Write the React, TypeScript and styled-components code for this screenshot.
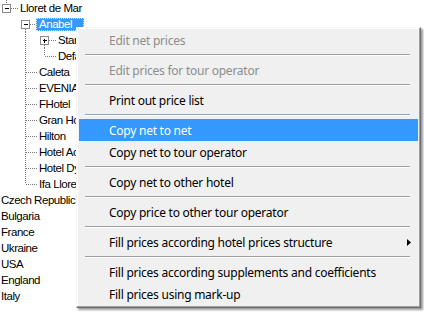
import React from 'react';
import styled, { createGlobalStyle } from 'styled-components';

const GlobalStyle = createGlobalStyle`
  html, body {
    margin: 0;
    padding: 0;
    background: #ffffff;
  }
  body {
    width: 424px;
    height: 319px;
    overflow: hidden;
  }
`;

type BoxKind = 'plus' | 'minus' | null;

interface TreeNode {
  label: string;
  level: number;
  guides: boolean[]; // vertical guide per ancestor column (levels 1..level-1)
  up?: boolean;
  down?: boolean;
  box?: BoxKind;
  selected?: boolean;
}

const Screen = styled.div`
  position: relative;
  width: 424px;
  height: 319px;
  overflow: hidden;
  background: #ffffff;
`;

const Tree = styled.div`
  display: flex;
  flex-direction: column;
  font-family: "Liberation Sans", Arial, sans-serif;
  font-size: 11.5px;
  letter-spacing: -0.45px;
  color: #000;
`;

const Row = styled.div`
  display: flex;
  align-items: center;
  height: 16px;
  white-space: nowrap;
`;

const Guide = styled.div<{ $line: boolean }>`
  flex: 0 0 19px;
  height: 16px;
  background-image: ${(p) =>
    p.$line ? 'linear-gradient(to bottom, #7a7a7a 50%, transparent 50%)' : 'none'};
  background-size: 1px 2px;
  background-repeat: repeat-y;
  background-position: 6px 0;
`;

const Label = styled.span<{ $selected?: boolean }>`
  box-sizing: border-box;
  margin-left: -2px;
  padding: 0 2px 0 3px;
  min-width: ${(p) => (p.$selected ? '48px' : '0')};
  height: 13px;
  line-height: 13px;
  color: ${(p) => (p.$selected ? '#ffffff' : '#000000')};
  background: ${(p) => (p.$selected ? '#3399ff' : 'transparent')};
  outline: ${(p) => (p.$selected ? '1px dotted #cfe6ff' : 'none')};
  outline-offset: -1px;
`;

const Connector = ({ up, down, box }: { up?: boolean; down?: boolean; box?: BoxKind }) => (
  <svg width="19" height="16" viewBox="0 0 19 16" style={{ flex: '0 0 19px', display: 'block' }} shapeRendering="crispEdges">
    {up && <line x1="6.5" y1="0" x2="6.5" y2={box ? 4 : 8} stroke="#7a7a7a" strokeDasharray="1 1" />}
    {down && <line x1="6.5" y1={box ? 13 : 8} x2="6.5" y2="16" stroke="#7a7a7a" strokeDasharray="1 1" />}
    <line x1={box ? 11 : 7} y1="8.5" x2="18" y2="8.5" stroke="#7a7a7a" strokeDasharray="1 1" />
    {box && (
      <>
        <rect x="2.5" y="4.5" width="8" height="8" fill="#ffffff" stroke="#8c8c8c" />
        <line x1="4.5" y1="8.5" x2="9" y2="8.5" stroke="#000" />
        {box === 'plus' && <line x1="6.5" y1="6.5" x2="6.5" y2="11" stroke="#000" />}
      </>
    )}
  </svg>
);

const hotels = ['Caleta', 'EVENIA Olympic', 'FHotel', 'Gran Hotel Monterrey', 'Hilton', 'Hotel Acacias', 'Hotel Dynamic', 'Ifa Lloret'];

const NODES: TreeNode[] = [
  { label: 'Lloret de Mar', level: 1, guides: [], up: true, box: 'minus' },
  { label: 'Anabel', level: 2, guides: [false], down: true, box: 'minus', selected: true },
  { label: 'Standard', level: 3, guides: [false, true], down: true, box: 'plus' },
  { label: 'Default', level: 3, guides: [false, true], up: true },
  ...hotels.map((h, i) => ({
    label: h,
    level: 2,
    guides: [false],
    up: true,
    down: i < hotels.length - 1,
  })),
  ...['Czech Republic', 'Bulgaria', 'France', 'Ukraine', 'USA', 'England', 'Italy'].map((c) => ({
    label: c,
    level: 0,
    guides: [],
  })),
];

const Menu = styled.div`
  position: absolute;
  left: 76px;
  top: 27px;
  width: 339px;
  display: flex;
  flex-direction: column;
  padding: 1px 2px 2px 2px;
  background: #f0f0f0;
  border: 1px solid;
  border-color: #f7f7f7 #6e6e6e #6e6e6e #f7f7f7;
  box-shadow: inset -1px -1px 0 #a0a0a0, inset 1px 1px 0 #ffffff, 2px 2px 2px rgba(0, 0, 0, 0.4);
  font-family: "Noto Sans", "Open Sans", sans-serif;
  font-size: 12px;
  letter-spacing: -0.25px;
`;

const Item = styled.div<{ $disabled?: boolean; $active?: boolean }>`
  display: flex;
  align-items: center;
  justify-content: space-between;
  height: 22px;
  padding: 0 7px 0 30px;
  white-space: nowrap;
  color: ${(p) => (p.$active ? '#ffffff' : p.$disabled ? '#8d8d8d' : '#000000')};
  background: ${(p) => (p.$active ? '#3399ff' : 'transparent')};
`;

const Separator = styled.div`
  height: 8px;
  margin: 0 8px 0 6px;
  display: flex;
  flex-direction: column;
  justify-content: flex-start;
  &::before {
    content: '';
    display: block;
    margin-top: 3px;
    height: 1px;
    background: #a0a0a0;
  }
  &::after {
    content: '';
    display: block;
    height: 1px;
    background: #ffffff;
  }
`;

const Arrow = () => (
  <svg width="4" height="7" viewBox="0 0 4 7" style={{ display: 'block' }}>
    <polygon points="0,0 4,3.5 0,7" fill="#000" />
  </svg>
);

type MenuEntry =
  | { sep: true }
  | { text: string; disabled?: boolean; active?: boolean; submenu?: boolean };

const MENU: MenuEntry[] = [
  { text: 'Edit net prices', disabled: true },
  { sep: true },
  { text: 'Edit prices for tour operator', disabled: true },
  { sep: true },
  { text: 'Print out price list' },
  { sep: true },
  { text: 'Copy net to net', active: true },
  { text: 'Copy net to tour operator' },
  { sep: true },
  { text: 'Copy net to other hotel' },
  { sep: true },
  { text: 'Copy price to other tour operator' },
  { sep: true },
  { text: 'Fill prices according hotel prices structure', submenu: true },
  { sep: true },
  { text: 'Fill prices according supplements and coefficients' },
  { text: 'Fill prices using mark-up' },
];

export default function App() {
  return (
    <>
      <GlobalStyle />
      <Screen>
        <Tree>
          {NODES.map((n, i) => (
            <Row key={i}>
              {n.guides.map((g, j) => (
                <Guide key={j} $line={g} />
              ))}
              {n.level > 0 && <Connector up={n.up} down={n.down} box={n.box ?? null} />}
              <Label $selected={n.selected}>{n.label}</Label>
            </Row>
          ))}
        </Tree>
        <Menu>
          {MENU.map((m, i) =>
            'sep' in m ? (
              <Separator key={i} />
            ) : (
              <Item key={i} $disabled={m.disabled} $active={m.active}>
                <span>{m.text}</span>
                {m.submenu && <Arrow />}
              </Item>
            )
          )}
        </Menu>
      </Screen>
    </>
  );
}
